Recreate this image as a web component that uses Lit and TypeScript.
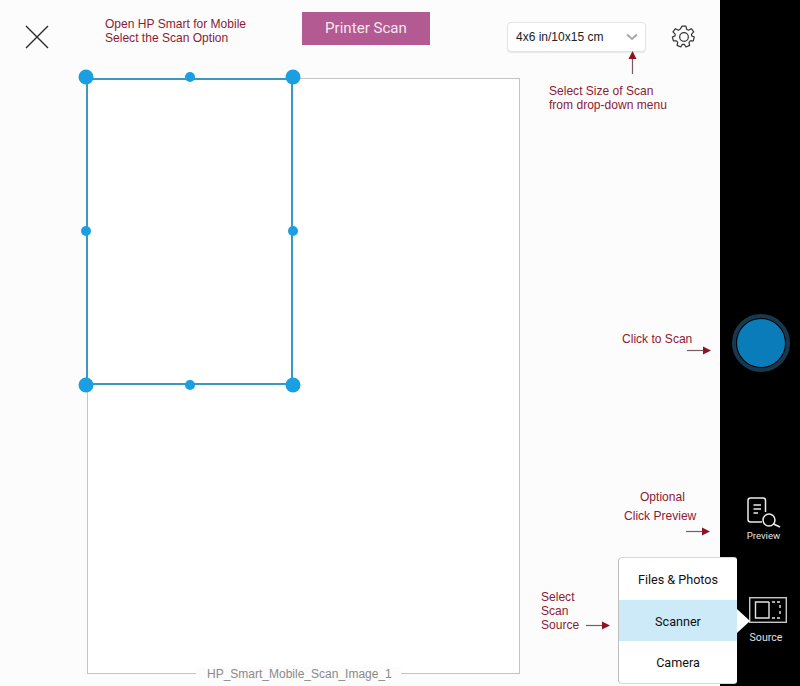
import { LitElement, html, css, svg } from "lit";
import { customElement } from "lit/decorators.js";

const arrowR = (w: number) => svg`<svg class="arr" width="${w}" height="9" viewBox="0 0 ${w} 9"><path d="M0 4.5H${w - 7}" stroke="#7a5a60" stroke-width="1.2"/><path d="M${w - 8} .5L${w} 4.5L${w - 8} 8.5Z" fill="#8e1226"/></svg>`;

@customElement("app-root")
export class AppRoot extends LitElement {
  static styles = css`
    :host { display: flex; width: 800px; height: 686px; overflow: hidden; position: relative; font-family: "Liberation Sans", Arial, sans-serif; }
    .main { width: 720px; height: 686px; background: #fcfcfc; position: relative; box-sizing: border-box; padding: 0 0 0 87px; }
    .rail { width: 80px; height: 686px; background: #000; display: flex; flex-direction: column; align-items: center; box-sizing: border-box; padding-top: 314px; color: #e8e8e8; }

    .top { height: 78px; box-sizing: border-box; display: flex; align-items: flex-start; }
    .print { margin: 12px 0 0 215px; width: 128px; height: 33px; background: #b35a93; color: #f4e6ef; font: 15.1px/33px Roboto, sans-serif; text-align: center; }
    .select { margin: 22px 0 0 77px; width: 139px; height: 30px; box-sizing: border-box; background: #fff; border: 1px solid #e4e4e4; border-radius: 4px; display: flex; align-items: center; justify-content: space-between; padding: 0 7px 0 8px; font-size: 12px; color: #222; box-shadow: 0 1px 1px #e8e8e8; }
    .gear { margin: 23px 0 0 25px; }

    .sheet { width: 433px; height: 596px; box-sizing: border-box; border: 1px solid #c4c4c4; background: #fff; position: relative; }
    .caption { position: absolute; left: 108px; bottom: -9px; padding: 0 9px 0 11px; background: #fcfcfc; color: #8a8a8a; font-size: 12px; line-height: 15px; white-space: nowrap; }

    .crop { position: absolute; left: -2px; top: -1px; width: 207px; height: 307px; box-sizing: border-box; border: 2px solid #3d98bf; }
    .h { position: absolute; border-radius: 50%; background: #199fe2; transform: translate(-50%, -50%); }
    .big { width: 15px; height: 15px; }
    .small { width: 10px; height: 10px; }

    .note { position: absolute; color: #8e1a33; font-size: 12.05px; line-height: 14px; white-space: nowrap; }
    .arr { position: absolute; display: block; }

    .close { position: absolute; left: 25px; top: 25px; }

    .shutter { width: 58px; height: 58px; box-sizing: border-box; border-radius: 50%; border: 4px solid #17384e; padding: 1px; background: #000; margin-left: 2px; }
    .shutter div { width: 100%; height: 100%; border-radius: 50%; background: #0a7cb9; }

    .tool { display: flex; flex-direction: column; align-items: center; font: 9.6px/12px Roboto, sans-serif; color: #e2e2e2; }
    .preview { margin-top: 125px; margin-left: 7px; }
    .preview span { margin-top: 1px; margin-right: 0; }
    .source { margin-top: 55px; margin-left: 16px; }
    .source span { margin-top: 9px; font-size: 10.6px; margin-right: 4px; }

    .popup { position: absolute; left: 619px; top: 558px; width: 118px; height: 125px; background: #fff; border-radius: 3px; box-shadow: -1px 0 0 #bdbdbd, 0 -1px 0 #d8d8d8, 0 1px 0 #d8d8d8; display: flex; flex-direction: column; font: 400 12.6px Roboto, sans-serif; color: #111; }
    .popup div { flex: 1; display: flex; align-items: center; justify-content: center; padding-top: 1px; box-sizing: border-box; }
    .popup .on { background: #cdeaf9; }
    .tip { position: absolute; left: 737px; top: 609px; width: 0; height: 0; border-left: 13px solid #fff; border-top: 12px solid transparent; border-bottom: 12px solid transparent; }
  `;

  render() {
    const handles = [
      [0, 0, 1], [104, 0, 0], [207, 0, 1],
      [0, 154, 0], [207, 154, 0],
      [0, 308, 1], [104, 308, 0], [207, 308, 1],
    ];
    return html`
      <div class="main">
        <div class="top">
          <div class="print">Printer Scan</div>
          <div class="select">
            <span>4x6 in/10x15 cm</span>
            <svg width="12" height="8" viewBox="0 0 12 8"><path d="M1 1.5L6 6L11 1.5" fill="none" stroke="#a9a9a9" stroke-width="2"/></svg>
          </div>
          <svg class="gear" width="26" height="28" viewBox="0 0 24 24" fill="none" stroke="#333" stroke-width="1.1" stroke-linejoin="round">
            <circle cx="12" cy="12" r="4"/>
            <path d="M10.2 2h3.6l.6 2.9 1.7.8 2.6-1.4 2.3 3-2.1 2 .2 1.7 2.4 1-.9 3.6-2.8-.1-1.2 1.4.6 2.8-3.4 1.5-1.5-2.4h-1.8l-1.5 2.4-3.4-1.5.6-2.8-1.2-1.4-2.8.1-.9-3.6 2.4-1 .2-1.7-2.1-2 2.3-3 2.6 1.4 1.7-.8z"/>
          </svg>
        </div>
        <div class="sheet">
          <div class="caption">HP_Smart_Mobile_Scan_Image_1</div>
          <div class="crop"></div>
          ${handles.map(([x, y, b]) => html`<div class="h ${b ? "big" : "small"}" style="left:${x - 2}px;top:${y - 2}px"></div>`)}
        </div>

        <svg class="close" width="24" height="24" viewBox="0 0 24 24"><path d="M1 1L23 23M23 1L1 23" stroke="#2a2a2a" stroke-width="1.4"/></svg>

        <div class="note" style="left:105px;top:17px">Open HP Smart for Mobile<br />Select the Scan Option</div>
        <div class="note" style="left:549px;top:84px">Select Size of Scan<br />from drop-down menu</div>
        <svg class="arr" style="left:628px;top:50px" width="9" height="25" viewBox="0 0 9 25"><path d="M4.5 8V24" stroke="#7a5a60" stroke-width="1.2"/><path d="M.5 9L4.5 1L8.5 9Z" fill="#8e1226"/></svg>
        <div class="note" style="left:622px;top:332px">Click to Scan</div>
        <div style="position:absolute;left:687px;top:346px">${arrowR(24)}</div>
        <div class="note" style="left:640px;top:490px">Optional</div>
        <div class="note" style="left:624px;top:509px">Click Preview</div>
        <div style="position:absolute;left:686px;top:527px">${arrowR(24)}</div>
        <div class="note" style="left:541px;top:590px">Select<br />Scan<br />Source</div>
        <div style="position:absolute;left:586px;top:621px">${arrowR(24)}</div>
      </div>

      <div class="rail">
        <div class="shutter"><div></div></div>
        <div class="tool preview">
          <svg width="34" height="32" viewBox="0 0 34 32" fill="none" stroke="#ececec" stroke-width="1.5">
            <path d="M15 25H3.5Q1 25 1 22.5V3.5Q1 1 3.5 1H16Q18.5 1 18.5 3.5V15"/>
            <path d="M6.5 8H14M6.5 12H14M6.5 16H11"/>
            <circle cx="22" cy="23" r="6"/>
            <path d="M26.5 27L33 30" stroke-width="1.8"/>
          </svg>
          <span>Preview</span>
        </div>
        <div class="tool source">
          <svg width="38" height="26" viewBox="0 0 38 26" fill="none" stroke="#c8c8c8" stroke-width="1.4">
            <rect x="0.7" y="0.7" width="36.6" height="24.6"/>
            <path d="M20 5H6.5V21H20V5" stroke="#e4e4e4"/>
            <path d="M23 5H31M31 8V11M31 14V17M23 21H31" stroke-dasharray="3 2" stroke="#e4e4e4"/>
          </svg>
          <span>Source</span>
        </div>
      </div>

      <div class="popup">
        <div>Files &amp; Photos</div>
        <div class="on">Scanner</div>
        <div>Camera</div>
      </div>
      <div class="tip"></div>
    `;
  }
}
